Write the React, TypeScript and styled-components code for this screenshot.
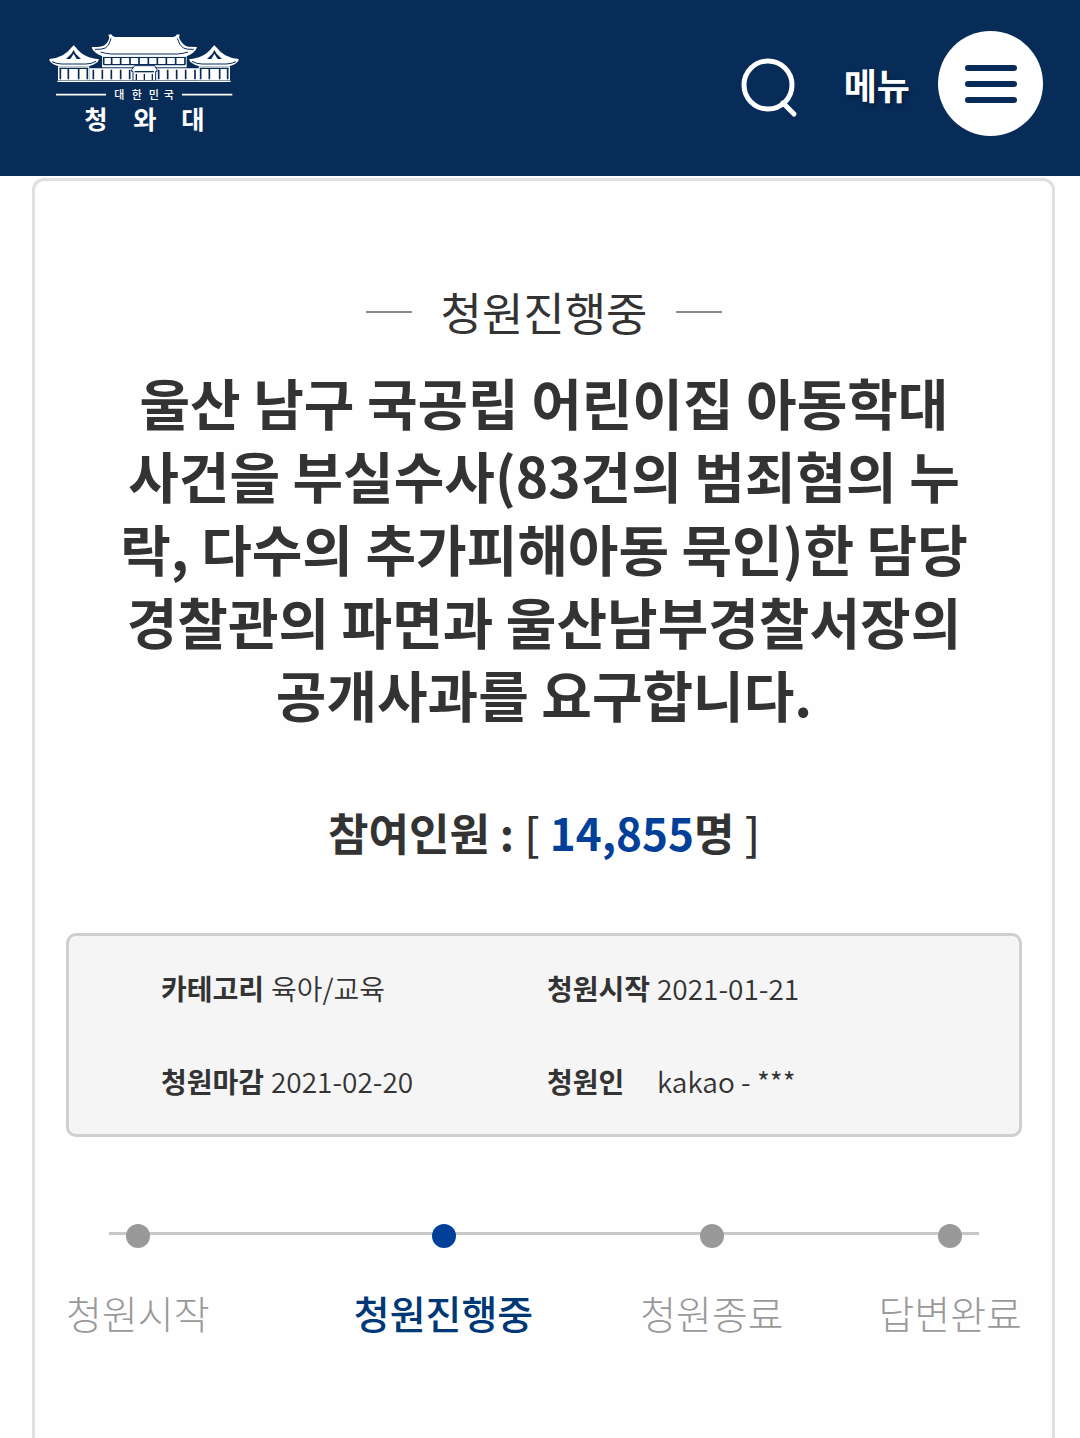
import React from "react";
import styled, { createGlobalStyle } from "styled-components";

const NAVY = "#082c58";
const INK = "#333333";
const BLUE = "#004098";

const GlobalStyle = createGlobalStyle`
  *, *::before, *::after { box-sizing: border-box; }
  body {
    margin: 0;
    background: #fefefe;
    color: ${INK};
    font-family: "Noto Sans CJK KR", "Noto Sans", sans-serif;
  }
  h1, h2, p, dl, dd, ol { margin: 0; padding: 0; }
`;

const Page = styled.div`
  display: flex;
  flex-direction: column;
  min-height: 100vh;
`;

const Header = styled.header`
  display: flex;
  align-items: flex-start;
  justify-content: space-between;
  padding: 31px 37px 32px 48px;
  background: ${NAVY};
`;

const LogoLink = styled.a`
  display: block;
  padding-top: 1px;
  svg { display: block; }
`;

const Tools = styled.div`
  display: flex;
  align-items: center;
`;

const SearchButton = styled.button`
  display: block;
  margin-right: 44px;
  padding: 8px 0 0;
  border: 0;
  background: none;
  cursor: pointer;
  svg { display: block; }
`;

const MenuButton = styled.button`
  display: flex;
  align-items: center;
  gap: 28px;
  padding: 0;
  border: 0;
  background: none;
  color: #ffffff;
  font: bold 36px/48px "Noto Sans CJK KR", sans-serif;
  text-shadow: 2px 3px 4px rgba(0, 0, 0, 0.35);
  cursor: pointer;
`;

const MenuDisc = styled.span`
  display: flex;
  flex-direction: column;
  align-items: center;
  justify-content: center;
  gap: 10px;
  width: 105px;
  height: 105px;
  border-radius: 50%;
  background: #ffffff;
`;

const MenuBar = styled.span`
  width: 52px;
  height: 6px;
  border-radius: 3px;
  background: ${NAVY};
`;

const Main = styled.main`
  display: flex;
  flex: 1;
  padding: 2px 25px 0 32px;
`;

const Card = styled.article`
  display: flex;
  flex: 1;
  flex-direction: column;
  min-width: 0;
  padding: 97px 30px 64px 31px;
  border: 3px solid #e0e0e0;
  border-bottom: 0;
  border-radius: 12px 12px 0 0;
`;

const Status = styled.p`
  display: flex;
  align-items: center;
  justify-content: center;
  gap: 28px;
  font-size: 45px;
  line-height: 68px;
  &::before, &::after {
    content: "";
    width: 46px;
    height: 2px;
    background: #888888;
  }
`;

const Title = styled.h1`
  padding: 0 48px;
  margin-top: 19px;
  font-size: 55px;
  font-weight: 700;
  line-height: 73px;
  text-align: center;
`;

const Count = styled.h2`
  margin-top: 68px;
  font-size: 44px;
  font-weight: 700;
  line-height: 68px;
  text-align: center;
`;

const CountNumber = styled.strong`
  color: ${BLUE};
  font-weight: 700;
`;

const Bracket = styled.span`
  font-weight: 500;
`;

const Info = styled.dl`
  display: grid;
  grid-template-columns: 1fr 1fr;
  row-gap: 45px;
  margin-top: 67px;
  padding: 28px 86px 29px 92px;
  border: 3px solid #cfcfcf;
  border-radius: 10px;
  background: #f5f5f5;
  font-size: 28px;
  line-height: 48px;
`;

const InfoItem = styled.div`
  display: flex;
`;

const InfoLabel = styled.dt`
  width: 110px;
  font-weight: 700;
`;

const InfoValue = styled.dd`
  font-weight: 350;
`;

const Steps = styled.ol`
  position: relative;
  display: grid;
  grid-template-columns: 188fr 379fr 158fr 231fr;
  margin-top: 87px;
  list-style: none;
  &::before {
    content: "";
    position: absolute;
    top: 8px;
    left: 43px;
    right: 43px;
    height: 3px;
    background: #c8c8c8;
  }
`;

const Step = styled.li<{ $active?: boolean; $align: "start" | "center" | "end" }>`
  position: relative;
  display: flex;
  flex-direction: column;
  align-items: center;
  gap: 36px;
  justify-self: ${(p) => p.$align};
  color: ${(p) => (p.$active ? "#003876" : "#999999")};
  font-size: 39px;
  font-weight: ${(p) => (p.$active ? 500 : 300)};
  line-height: 56px;
  white-space: nowrap;
  &::before {
    content: "";
    width: 24px;
    height: 24px;
    border-radius: 50%;
    background: ${(p) => (p.$active ? BLUE : "#999999")};
  }
`;

const info = [
  { label: "카테고리", value: "육아/교육" },
  { label: "청원시작", value: "2021-01-21" },
  { label: "청원마감", value: "2021-02-20" },
  { label: "청원인", value: "kakao - ***" },
];

const steps = [
  { label: "청원시작", align: "start" as const },
  { label: "청원진행중", align: "center" as const, active: true },
  { label: "청원종료", align: "center" as const },
  { label: "답변완료", align: "end" as const },
];

const Pavilion = () => (
  <g>
    <path d="M101 76 L107 82 Q122 103 145 111 Q162 117 177 118 L173 126 Q160 136 145 139 H58 Q40 136 29 123 L28 117 Q50 116 68 106 Q84 96 93 84 Z" fill="#fff" />
    <path d="M101 90 L107 101 L123 117 H78 L94 101 Z" fill={NAVY} />
    <path d="M101 101 L110 117 H91 Z" fill="#fff" />
    <path d="M36 125 Q50 132 66 132 H138 Q154 132 168 124" fill="none" stroke={NAVY} strokeWidth="3" />
    <path d="M54 139 H148 V181 H54 Z" fill="#fff" />
    <path d="M58 143 H145 V147 H58 Z" fill={NAVY} />
    <path d="M61 147 V178 M85 147 V178 M116 147 V178 M142 147 V178" stroke={NAVY} strokeWidth="5" />
  </g>
);

const Logo = () => (
  <svg width="192" height="112" viewBox="24 36 576 336" role="img" aria-label="대한민국 청와대">
    <path d="M148 145 H478 V181 H148 Z" fill="#fff" />
    <path d="M160 149 V178 M187 149 V178 M214 149 V178 M242 149 V178 M269 149 V178 M356 149 V178 M383 149 V178 M410 149 V178 M437 149 V178 M465 149 V178" stroke={NAVY} strokeWidth="5" />
    <path d="M186 108 H440 V142 H186 Z" fill="#fff" />
    <path d="M189 112 H437 M191 134 H435" stroke={NAVY} strokeWidth="4" />
    <path d="M191 112 V134 M215 112 V134 M242 112 V134 M270 112 V134 M297 112 V134 M325 112 V134 M352 112 V134 M379 112 V134 M407 112 V134 M435 112 V134" stroke={NAVY} strokeWidth="5" />
    <path d="M205 44 L214 43 Q217 51 225 51 H400 Q408 51 411 43 L419 44 L417 53 Q427 76 445 80 L471 81 Q468 94 450 104 L436 110 H190 L174 103 Q158 94 155 81 Q180 82 190 77 Q204 70 208 53 Z" fill="#fff" />
    <path d="M213 55 Q208 76 196 84 Q186 89 165 88 M412 55 Q418 76 430 84 Q440 89 461 88 M182 96 Q196 101 214 102 H412 Q430 101 444 96" fill="none" stroke={NAVY} strokeWidth="3" />
    <Pavilion />
    <g transform="translate(624 0) scale(-1 1)">
      <Pavilion />
    </g>
    <path d="M284 137 H344 L351 149 V154 H347 V182 H279 V154 H275 V149 Z" fill="#fff" stroke={NAVY} strokeWidth="3" />
    <path d="M284 155 H342" stroke={NAVY} strokeWidth="4" />
    <path d="M289 162 V180 M313 162 V180 M337 162 V180" stroke={NAVY} strokeWidth="4" />
    <path d="M52 184 H572" stroke="#fff" strokeWidth="4" />
    <path d="M48 224 H198 M426 224 H577" stroke="#fff" strokeWidth="5" />
    <g fill="#fff" fontFamily="'Noto Sans CJK KR', sans-serif">
      <text x="223 275 326 371" y="237" fontSize="33" fontWeight="500">대한민국</text>
      <text x="133 280 424" y="327" fontSize="76" fontWeight="700">청와대</text>
    </g>
  </svg>
);

const SearchIcon = () => (
  <svg width="60" height="62" viewBox="0 0 60 62" fill="none" stroke="#fff" aria-hidden="true">
    <circle cx="28" cy="28" r="24" strokeWidth="5" />
    <path d="M43 46 L54 57" strokeWidth="5" strokeLinecap="round" />
  </svg>
);

export default function App() {
  return (
    <Page>
      <GlobalStyle />
      <Header>
        <LogoLink href="#">
          <Logo />
        </LogoLink>
        <Tools>
          <SearchButton type="button" aria-label="검색">
            <SearchIcon />
          </SearchButton>
          <MenuButton type="button">
            메뉴
            <MenuDisc>
              <MenuBar />
              <MenuBar />
              <MenuBar />
            </MenuDisc>
          </MenuButton>
        </Tools>
      </Header>
      <Main>
        <Card>
          <Status>청원진행중</Status>
          <Title>
            울산 남구 국공립 어린이집 아동학대 사건을 부실수사(83건의 범죄혐의 누락, 다수의 추가피해아동 묵인)한
            담당 경찰관의 파면과 울산남부경찰서장의 공개사과를 요구합니다.
          </Title>
          <Count>
            참여인원 : <Bracket>[</Bracket> <CountNumber>14,855</CountNumber>명 <Bracket>]</Bracket>
          </Count>
          <Info>
            {info.map((item) => (
              <InfoItem key={item.label}>
                <InfoLabel>{item.label}</InfoLabel>
                <InfoValue>{item.value}</InfoValue>
              </InfoItem>
            ))}
          </Info>
          <Steps>
            {steps.map((step) => (
              <Step
                key={step.label}
                $align={step.align}
                $active={step.active}
                aria-current={step.active ? "step" : undefined}
              >
                {step.label}
              </Step>
            ))}
          </Steps>
        </Card>
      </Main>
    </Page>
  );
}
